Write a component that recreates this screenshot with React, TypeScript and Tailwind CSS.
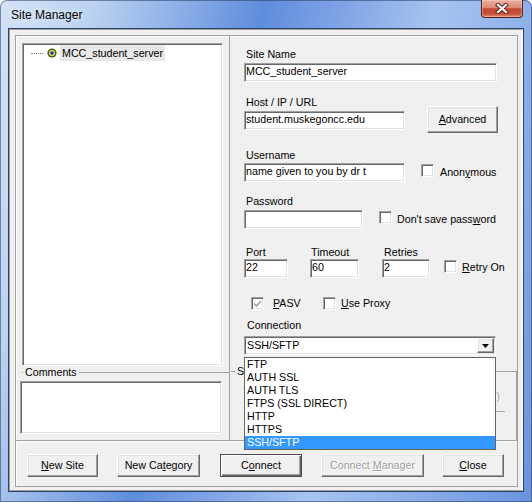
import React from 'react';

const sunken =
  "bg-white border border-t-[#a0a0a0] border-l-[#a0a0a0] border-r-white border-b-white shadow-[inset_1px_1px_0_#696969,inset_-1px_-1px_0_#e3e3e3]";
const raised =
  "bg-[#f0f0f0] border border-t-white border-l-white border-r-[#696969] border-b-[#696969] shadow-[inset_-1px_-1px_0_#a0a0a0,inset_1px_1px_0_#e3e3e3]";

const connections = ["FTP", "AUTH SSL", "AUTH TLS", "FTPS (SSL DIRECT)", "HTTP", "HTTPS", "SSH/SFTP"];

function TextBox({ value, className }: { value?: string; className: string }) {
  return (
    <div className={`${sunken} h-[19px] flex items-center pl-[1px] pb-[2px] whitespace-nowrap overflow-hidden ${className}`}>
      {value}
    </div>
  );
}

function CheckBox({ checked, disabled }: { checked?: boolean; disabled?: boolean }) {
  return (
    <span
      className={`${sunken} ${disabled ? 'bg-[#f0f0f0]' : ''} w-[13px] h-[13px] shrink-0 inline-flex items-center justify-center`}
    >
      {checked && (
        <svg width="9" height="8" viewBox="0 0 9 8">
          <polyline points="1,3.5 3.3,6 8,1" fill="none" stroke={disabled ? '#a0a0a0' : '#000'} strokeWidth="1.6" />
        </svg>
      )}
    </span>
  );
}

function Label({ children, className = '' }: { children: React.ReactNode; className?: string }) {
  return <div className={`h-[13px] leading-[13px] whitespace-nowrap ${className}`}>{children}</div>;
}

export default function App() {
  return (
    <div className="w-[532px] h-[502px] flex flex-col rounded-t-[7px] overflow-hidden font-['Liberation_Sans',Arial,sans-serif] text-[10.7px] text-black bg-[linear-gradient(105deg,#d3e3f6_0%,#bcd3f1_14%,#82a8e5_30%,#5f8ddb_40%,#80a5e6_52%,#a7c4f0_66%,#8aaee9_82%,#6893dd_100%)] shadow-[inset_0_0_0_1px_rgba(40,60,100,0.55)]">
      {/* title bar */}
      <div className="h-[28px] flex items-start shrink-0">
        <div className="pl-[11px] pt-[8px] text-[12px] leading-[14px] [text-shadow:0_0_6px_rgba(255,255,255,0.9)]">
          Site Manager
        </div>
        <div className="ml-auto mr-[9px] w-[42px] h-[18px] rounded-b-[4px] border border-t-0 border-[#56201a] bg-[linear-gradient(#e9b1a2_0%,#da8a76_45%,#c2472d_52%,#c5503a_80%,#de8a70_100%)] flex items-center justify-center shadow-[inset_0_0_0_1px_rgba(255,210,200,0.45)]">
          <svg width="14" height="11" viewBox="0 0 14 11">
            <path d="M3 2 L11 9 M11 2 L3 9" stroke="#5a2218" strokeWidth="4.2" strokeLinecap="square" />
            <path d="M3 2 L11 9 M11 2 L3 9" stroke="#ffffff" strokeWidth="2.3" strokeLinecap="square" />
          </svg>
        </div>
      </div>

      {/* client area */}
      <div className="ml-[8px] w-[516px] h-[464px] border border-[#2e4266]">
        <div className="h-full bg-[#f0f0f0] border border-t-[#a0a0a0] border-l-[#a0a0a0] border-b-[#a0a0a0] border-r-white pt-[5px] pl-[5px]">
          <div className="w-[503px] h-[452px] border border-[#a0a0a0] shadow-[inset_1px_1px_0_#fff] flex flex-col">
            {/* top section */}
            <div className="h-[405px] flex border-b border-[#a0a0a0]">
              {/* left pane */}
              <div className="w-[214px] border-r border-[#a0a0a0] flex flex-col">
                <div className={`${sunken} ml-[6px] mt-[7px] w-[201px] h-[323px] shrink-0`}>
                  <div className="mt-[1px] h-[16px] flex items-center">
                    <div className="ml-[8px] w-[12px] border-t border-dotted border-[#808080]" />
                    <svg className="ml-[4px]" width="10" height="10" viewBox="0 0 10 10">
                      <circle cx="5" cy="5" r="4.6" fill="#4a6a00" />
                      <circle cx="5" cy="5" r="3" fill="#e4e47c" />
                      <circle cx="5" cy="5" r="1.7" fill="#1a2aa8" />
                    </svg>
                    <div className="ml-[3px] h-[16px] px-[2px] flex items-center bg-[#e8e8e8]">MCC_student_server</div>
                  </div>
                </div>
                <fieldset className="ml-[6px] flex-1 min-w-0 border-t border-[#a0a0a0]">
                  <legend className="ml-[1px] px-[2px] leading-[13px]">Comments</legend>
                  <div className={`${sunken} ml-[-2px] mt-[2px] w-[202px] h-[53px]`} />
                </fieldset>
              </div>

              {/* right pane */}
              <div className="flex-1 flex flex-col">
                <div className="pl-[14px] flex flex-col">
                  <Label className="mt-[12px] pl-[2px]">Site Name</Label>
                  <TextBox className="mt-[2px] w-[253px]" value="MCC_student_server" />

                  <div className="flex items-end">
                    <div className="flex flex-col">
                      <Label className="mt-[14px] pl-[2px]">Host / IP / URL</Label>
                      <TextBox className="mt-[2px] w-[161px]" value="student.muskegoncc.edu" />
                    </div>
                    <div className={`${raised} ml-[22px] mb-[-3px] w-[71px] h-[27px] flex items-center justify-center`}>
                      <span><u>A</u>dvanced</span>
                    </div>
                  </div>

                  <Label className="mt-[19px] pl-[2px]">Username</Label>
                  <div className="mt-[1px] flex items-center">
                    <TextBox className="w-[161px]" value="name given to you by dr t" />
                    <div className="ml-[16px]"><CheckBox /></div>
                    <span className="ml-[6px]">Anon<u>y</u>mous</span>
                  </div>

                  <Label className="mt-[13px] pl-[2px]">Password</Label>
                  <div className="mt-[2px] flex items-center">
                    <TextBox className="w-[119px]" />
                    <div className="ml-[16px]"><CheckBox /></div>
                    <span className="ml-[5px]">Don't save pass<u>w</u>ord</span>
                  </div>

                  <div className="mt-[17px] flex items-end">
                    <div className="flex flex-col">
                      <Label className="pl-[2px]">Port</Label>
                      <TextBox className="w-[44px]" value="22" />
                    </div>
                    <div className="ml-[22px] flex flex-col">
                      <Label className="pl-[1px]">Timeout</Label>
                      <TextBox className="w-[49px]" value="60" />
                    </div>
                    <div className="ml-[23px] flex flex-col">
                      <Label className="pl-[2px]">Retries</Label>
                      <TextBox className="w-[48px]" value="2" />
                    </div>
                    <div className="ml-[14px] mb-[3px] flex items-center">
                      <CheckBox />
                      <span className="ml-[5px]"><u>R</u>etry On</span>
                    </div>
                  </div>

                  <div className="mt-[19px] pl-[7px] h-[13px] flex items-center">
                    <div className="w-[72px] flex items-center">
                      <CheckBox checked disabled />
                      <span className="ml-[9px]"><u>P</u>ASV</span>
                    </div>
                    <div className="flex items-center">
                      <CheckBox />
                      <span className="ml-[5px]"><u>U</u>se Proxy</span>
                    </div>
                  </div>

                  <Label className="mt-[9px] pl-[3px]">Connection</Label>
                  <div className="relative mt-[4px] w-[252px]">
                    <div className={`${sunken} h-[19px] flex items-center`}>
                      <span className="pl-[2px] pb-[1px]">SSH/SFTP</span>
                      <div className={`${raised} ml-auto mr-[1px] w-[17px] h-[15px] flex items-center justify-center`}>
                        <svg width="7" height="4" viewBox="0 0 7 4">
                          <polygon points="0,0 7,0 3.5,4" fill="#000" />
                        </svg>
                      </div>
                    </div>
                    {/* open drop-down list */}
                    <div className="absolute z-10 top-[21px] left-0 w-[252px] bg-white border border-[#646464]">
                      {connections.map((c) => (
                        <div
                          key={c}
                          className={`h-[13px] leading-[13px] pl-[2px] whitespace-nowrap ${c === 'SSH/SFTP' ? 'bg-[#3399ff] text-white' : ''}`}
                        >
                          {c}
                        </div>
                      ))}
                    </div>
                  </div>
                </div>

                <fieldset className="ml-[1px] mt-[10px] flex-1 min-w-0 border-t border-r border-[#a0a0a0]">
                  <legend className="ml-[4px] px-[2px] leading-[13px]">SSL Options</legend>
                  <div className="mt-[10px] pr-[16px] text-right text-[#a0a0a0] [text-shadow:1px_1px_0_#fff] whitespace-nowrap">
                    Clear Command Channel (CCC)
                  </div>
                  <div className="mt-[7px] ml-auto mr-[11px] w-[10px] h-px bg-[#a0a0a0]" />
                </fieldset>
              </div>
            </div>

            {/* buttons */}
            <div className="flex-1 flex items-start pt-[13px] pl-[11px] shadow-[inset_0_1px_0_#fff]">
              <div className={`${raised} w-[71px] h-[23px] flex items-center justify-center`}>
                <span><u>N</u>ew Site</span>
              </div>
              <div className={`${raised} ml-[19px] w-[83px] h-[23px] flex items-center justify-center`}>
                <span>New Ca<u>t</u>egory</span>
              </div>
              <div className="ml-[20px] w-[82px] h-[23px] border border-[#4d4d4d] bg-[#f0f0f0] shadow-[inset_1px_1px_0_#fff,inset_-1px_-1px_0_#696969,inset_-2px_-2px_0_#a0a0a0] flex items-center justify-center">
                <span>C<u>o</u>nnect</span>
              </div>
              <div className={`${raised} ml-[19px] w-[103px] h-[23px] flex items-center justify-center text-[#a0a0a0] [text-shadow:1px_1px_0_#fff]`}>
                <span>Connect <u>M</u>anager</span>
              </div>
              <div className={`${raised} ml-[18px] w-[62px] h-[23px] flex items-center justify-center`}>
                <span><u>C</u>lose</span>
              </div>
            </div>
          </div>
        </div>
      </div>
    </div>
  );
}
